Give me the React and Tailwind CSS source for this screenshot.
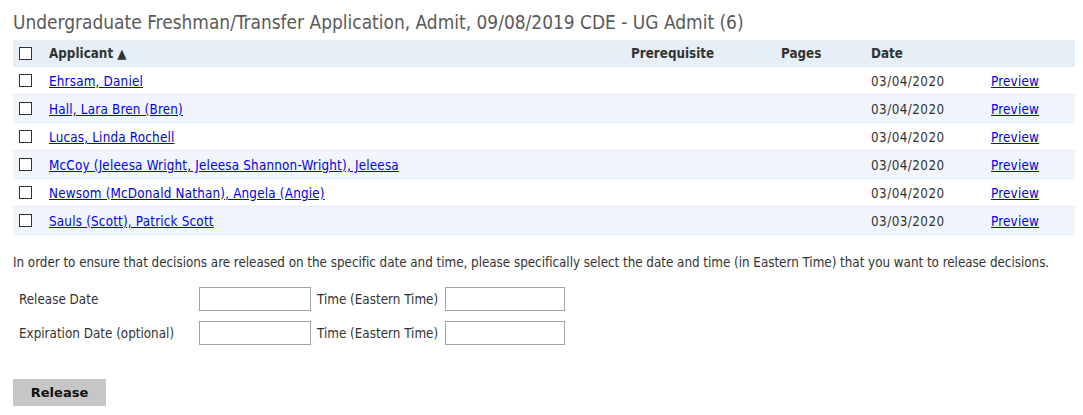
import React from "react";

const rows = [
  { name: "Ehrsam, Daniel", date: "03/04/2020" },
  { name: "Hall, Lara Bren (Bren)", date: "03/04/2020" },
  { name: "Lucas, Linda Rochell", date: "03/04/2020" },
  { name: "McCoy (Jeleesa Wright, Jeleesa Shannon-Wright), Jeleesa", date: "03/04/2020" },
  { name: "Newsom (McDonald Nathan), Angela (Angie)", date: "03/04/2020" },
  { name: "Sauls (Scott), Patrick Scott", date: "03/03/2020" },
];

function Box() {
  return <span className="block w-[13px] h-[13px] border border-[#333] bg-white" />;
}

export default function App() {
  const font = { fontFamily: '"DejaVu Sans Condensed", "DejaVu Sans", Tahoma, sans-serif' };
  return (
    <div className="bg-white w-[1083px] h-[415px] text-[#333] text-[13.33px]" style={font}>
      <div className="pl-[13px] pt-[10px]">
        <h1 className="text-[18.95px] leading-[24px] text-[#5a5a5a] font-normal">
          Undergraduate Freshman/Transfer Application, Admit, 09/08/2019 CDE - UG Admit (6)
        </h1>
        <div className="mt-[6px] w-[1062px]">
          <div className="grid grid-cols-[36px_582px_150px_90px_120px_1fr] items-center h-[27px] bg-[#e6eef7] font-bold">
            <div className="pl-[6px]"><Box /></div>
            <div className="pt-[1px]">Applicant ▲</div>
            <div className="pt-[1px]">Prerequisite</div>
            <div className="pt-[1px]">Pages</div>
            <div className="pt-[1px]">Date</div>
            <div />
          </div>
          {rows.map((r, i) => (
            <div
              key={i}
              className={`grid grid-cols-[36px_582px_150px_90px_120px_1fr] items-center h-[28px] border-b border-[#e2ebf6] ${i % 2 === 1 ? "bg-[#f1f6fc]" : "bg-white"}`}
            >
              <div className="pl-[6px]"><Box /></div>
              <div className="pt-[3px] tracking-[0.2px]"><a href="#" className="text-[#0000ee] underline">{r.name}</a></div>
              <div />
              <div />
              <div className="pt-[3px] tracking-[0.45px]">{r.date}</div>
              <div className="pt-[3px] tracking-[0.2px]"><a href="#" className="text-[#0000ee] underline">Preview</a></div>
            </div>
          ))}
        </div>
        <p className="mt-[20px] leading-[16px] tracking-[-0.03px]">
          In order to ensure that decisions are released on the specific date and time, please specifically select the date and time (in Eastern Time) that you want to release decisions.
        </p>
        <div className="mt-[16px] flex flex-col gap-[10px]">
          <div className="flex items-center h-[24px]">
            <div className="w-[186px] pl-[6px] pt-[1px]">Release Date</div>
            <input className="w-[112px] h-[24px] border border-[#a3a3a3] bg-white" />
            <div className="pl-[6px] pr-[6px] w-[134px] pt-[1px]">Time (Eastern Time)</div>
            <input className="w-[120px] h-[24px] border border-[#a3a3a3] bg-white" />
          </div>
          <div className="flex items-center h-[24px]">
            <div className="w-[186px] pl-[6px] pt-[1px]">Expiration Date (optional)</div>
            <input className="w-[112px] h-[24px] border border-[#a3a3a3] bg-white" />
            <div className="pl-[6px] pr-[6px] w-[134px] pt-[1px]">Time (Eastern Time)</div>
            <input className="w-[120px] h-[24px] border border-[#a3a3a3] bg-white" />
          </div>
        </div>
        <button
          className="mt-[34px] w-[93px] h-[27px] bg-[#c6c6c6] font-bold text-[#111] text-[13px]"
          style={{ fontFamily: '"DejaVu Sans", Verdana, sans-serif' }}
        >
          Release
        </button>
      </div>
    </div>
  );
}
